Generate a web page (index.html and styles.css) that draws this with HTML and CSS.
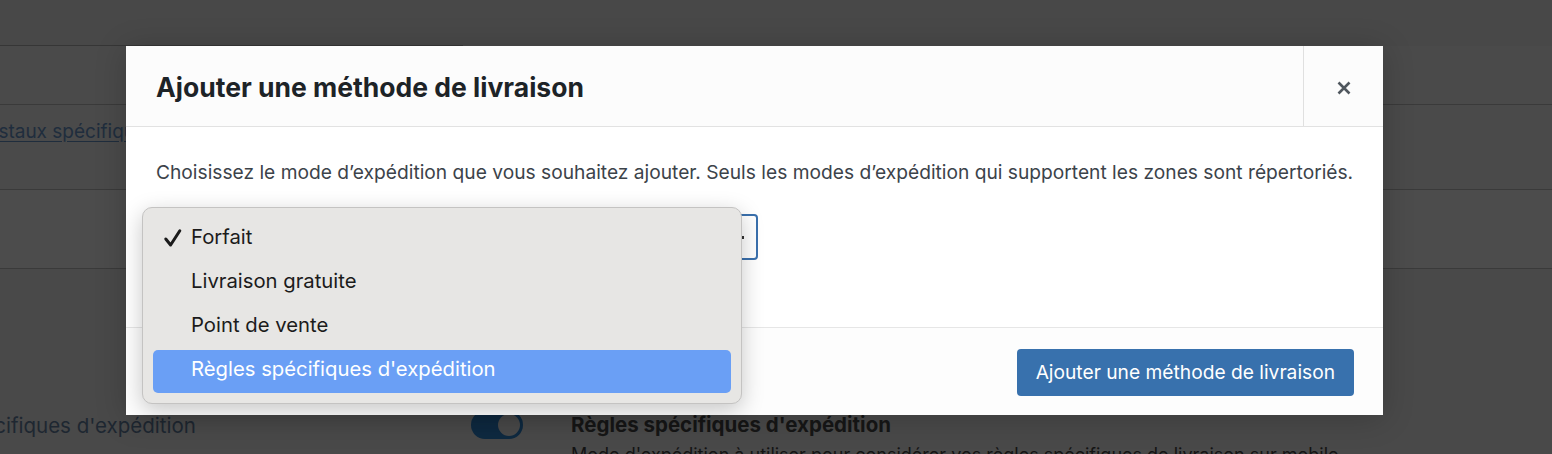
FILE: index.html
```html
<!DOCTYPE html>
<html lang="fr">
<head>
<meta charset="utf-8">
<title>Ajouter une méthode de livraison</title>
<link rel="stylesheet" href="styles.css">
</head>
<body>
<div class="page">
  <div class="topbar"><div class="tabbox"></div></div>
  <div class="row row-a"></div>
  <div class="row row-b"><a class="link" href="#">Codes postaux spécifiques</a></div>
  <div class="row row-c"></div>
  <div class="method-row">
    <div class="method-name"><span class="method-name-text">Règles spécifiques d'expédition</span></div>
    <div class="method-toggle"><span class="knob"></span></div>
    <div class="method-desc">
      <div class="method-title">Règles spécifiques d'expédition</div>
      <div class="method-text">Mode d'expédition à utiliser pour considérer vos règles spécifiques de livraison sur mobile.</div>
    </div>
  </div>
</div>

<div class="modal">
  <div class="modal-header">
    <h1 class="modal-title">Ajouter une méthode de livraison</h1>
    <button class="modal-close" aria-label="Fermer">
      <svg width="16" height="16" viewBox="0 0 16 16"><path d="M2.5 2.5 L13.5 13.5 M13.5 2.5 L2.5 13.5" stroke="#50575e" stroke-width="2.6" stroke-linecap="butt"/></svg>
    </button>
  </div>
  <div class="modal-body">
    <p class="modal-intro">Choisissez le mode d’expédition que vous souhaitez ajouter. Seuls les modes d’expédition qui supportent les zones sont répertoriés.</p>
    <div class="select"><span class="select-arrow"></span></div>
  </div>
  <div class="modal-footer">
    <button class="btn-primary">Ajouter une méthode de livraison</button>
  </div>
</div>

<ul class="menu">
  <li class="menu-item checked"><svg class="check" width="20" height="20" viewBox="0 0 20 20"><path d="M2.8 11 L7.6 17 L16.8 2.8" fill="none" stroke="#1b1b1b" stroke-width="3" stroke-linecap="round" stroke-linejoin="round"/></svg>Forfait</li>
  <li class="menu-item">Livraison gratuite</li>
  <li class="menu-item">Point de vente</li>
  <li class="menu-item active">Règles spécifiques d'expédition</li>
</ul>
</body>
</html>
```
FILE: styles.css
```css
html, body {
  margin: 0;
  padding: 0;
}
body {
  width: 1552px;
  height: 454px;
  overflow: hidden;
  background: #494949;
  font-family: Inter, "Noto Sans", "Liberation Sans", sans-serif;
  position: relative;
}
.page {
  display: flex;
  flex-direction: column;
  overflow: hidden;
}
.topbar {
  height: 46px;
  background: #484848;
}
.tabbox {
  width: 463px;
  height: 45px;
  border-bottom: 1px solid #363636;
}
.row {
  border-bottom: 1px solid #3a3a3a;
  background: #4a4a4a;
  box-sizing: border-box;
}
.row-a { height: 59px; }
.row-b {
  height: 85px;
  padding-top: 15px;
  overflow: hidden;
  white-space: nowrap;
}
.link {
  display: inline-block;
  margin-left: -88px;
  color: #1f2d3d;
  font-size: 19px;
  text-decoration: underline;
  text-underline-offset: 3px;
}
.row-c {
  height: 79px;
  background: #4c4c4c;
}
.method-row {
  display: flex;
  align-items: flex-start;
  padding-top: 150px;
  white-space: nowrap;
}
.method-name {
  width: 471px;
  flex: none;
  overflow: hidden;
  font-size: 20.5px;
  color: #1e2731;
  line-height: 22px;
  margin-top: -4px;
}
.method-name-text {
  display: inline-block;
  margin-left: -112px;
}
.method-toggle {
  flex: none;
  width: 52px;
  height: 28px;
  border-radius: 14px;
  background: #0e2940;
  margin-top: -8px;
  display: flex;
  align-items: center;
  justify-content: flex-end;
  padding-right: 3px;
  box-sizing: border-box;
}
.knob {
  width: 22px;
  height: 22px;
  border-radius: 50%;
  background: #494949;
}
.method-desc {
  flex: 1;
  min-width: 0;
  margin-left: 48px;
  margin-top: -5px;
}
.method-title {
  font-size: 20.5px;
  font-weight: 700;
  color: #161616;
  line-height: 22px;
}
.method-text {
  font-size: 18px;
  color: #141414;
  line-height: 22px;
  margin-top: 8px;
  overflow: hidden;
}

/* Modal */
.modal {
  position: absolute;
  left: 126px;
  top: 46px;
  width: 1257px;
  height: 369px;
  background: #fff;
  display: flex;
  flex-direction: column;
  box-shadow: 0 3px 30px rgba(0,0,0,0.2);
}
.modal-header {
  height: 81px;
  flex: none;
  display: flex;
  align-items: stretch;
  background: #fcfcfc;
  border-bottom: 1px solid #e2e2e2;
  box-sizing: border-box;
}
.modal-title {
  flex: 1;
  margin: 0;
  padding-left: 30px;
  padding-top: 2px;
  display: flex;
  align-items: center;
  font-size: 26.5px;
  font-weight: 700;
  color: #1d2327;
}
.modal-close {
  width: 80px;
  flex: none;
  border: 0;
  border-left: 1px solid #e0e0e0;
  background: transparent;
  display: flex;
  align-items: center;
  justify-content: center;
  padding: 0;
  padding-top: 4px;
}
.modal-body {
  flex: 1;
  padding: 0 29px 0 30px;
  background: #fff;
}
.modal-intro {
  margin: 34px 0 0;
  font-size: 19.2px;
  line-height: 22px;
  color: #3c434a;
  white-space: nowrap;
}
.select {
  margin-top: 31px;
  width: 602px;
  height: 46px;
  border: 2px solid #3a70ad;
  border-radius: 4px;
  box-sizing: border-box;
  position: relative;
}
.select-arrow {
  position: absolute;
  right: 12px;
  top: 20px;
  width: 3px;
  height: 3px;
  background: #333;
}
.modal-footer {
  height: 88px;
  flex: none;
  display: flex;
  align-items: center;
  justify-content: flex-end;
  padding-right: 29px;
  background: #fdfdfd;
  border-top: 1px solid #e6e6e6;
  box-sizing: border-box;
  padding-top: 1px;
}
.btn-primary {
  height: 47px;
  padding: 0 19px;
  border: 0;
  border-radius: 4px;
  background: #3871ad;
  color: #fff;
  font-family: inherit;
  font-size: 19.2px;
}

/* Native dropdown menu */
.menu {
  position: absolute;
  left: 142px;
  top: 207px;
  width: 600px;
  height: 197px;
  margin: 0;
  padding: 8px 10px;
  box-sizing: border-box;
  list-style: none;
  background: #e7e6e4;
  border: 1px solid #c4c3c2;
  border-radius: 10px;
  box-shadow: 0 6px 22px rgba(0,0,0,0.22);
  display: flex;
  flex-direction: column;
}
.menu-item {
  height: 44px;
  line-height: 42px;
  padding-left: 38px;
  font-size: 20.3px;
  color: #1b1b1b;
  border-radius: 5px;
  position: relative;
  flex: none;
}
.menu-item.checked {
  line-height: 41px;
}
.check {
  position: absolute;
  left: 10px;
  top: 12px;
}
.menu-item.active {
  background: #6a9ff5;
  color: #fff;
  height: 43px;
  margin-top: 2px;
  line-height: 38px;
}
```
